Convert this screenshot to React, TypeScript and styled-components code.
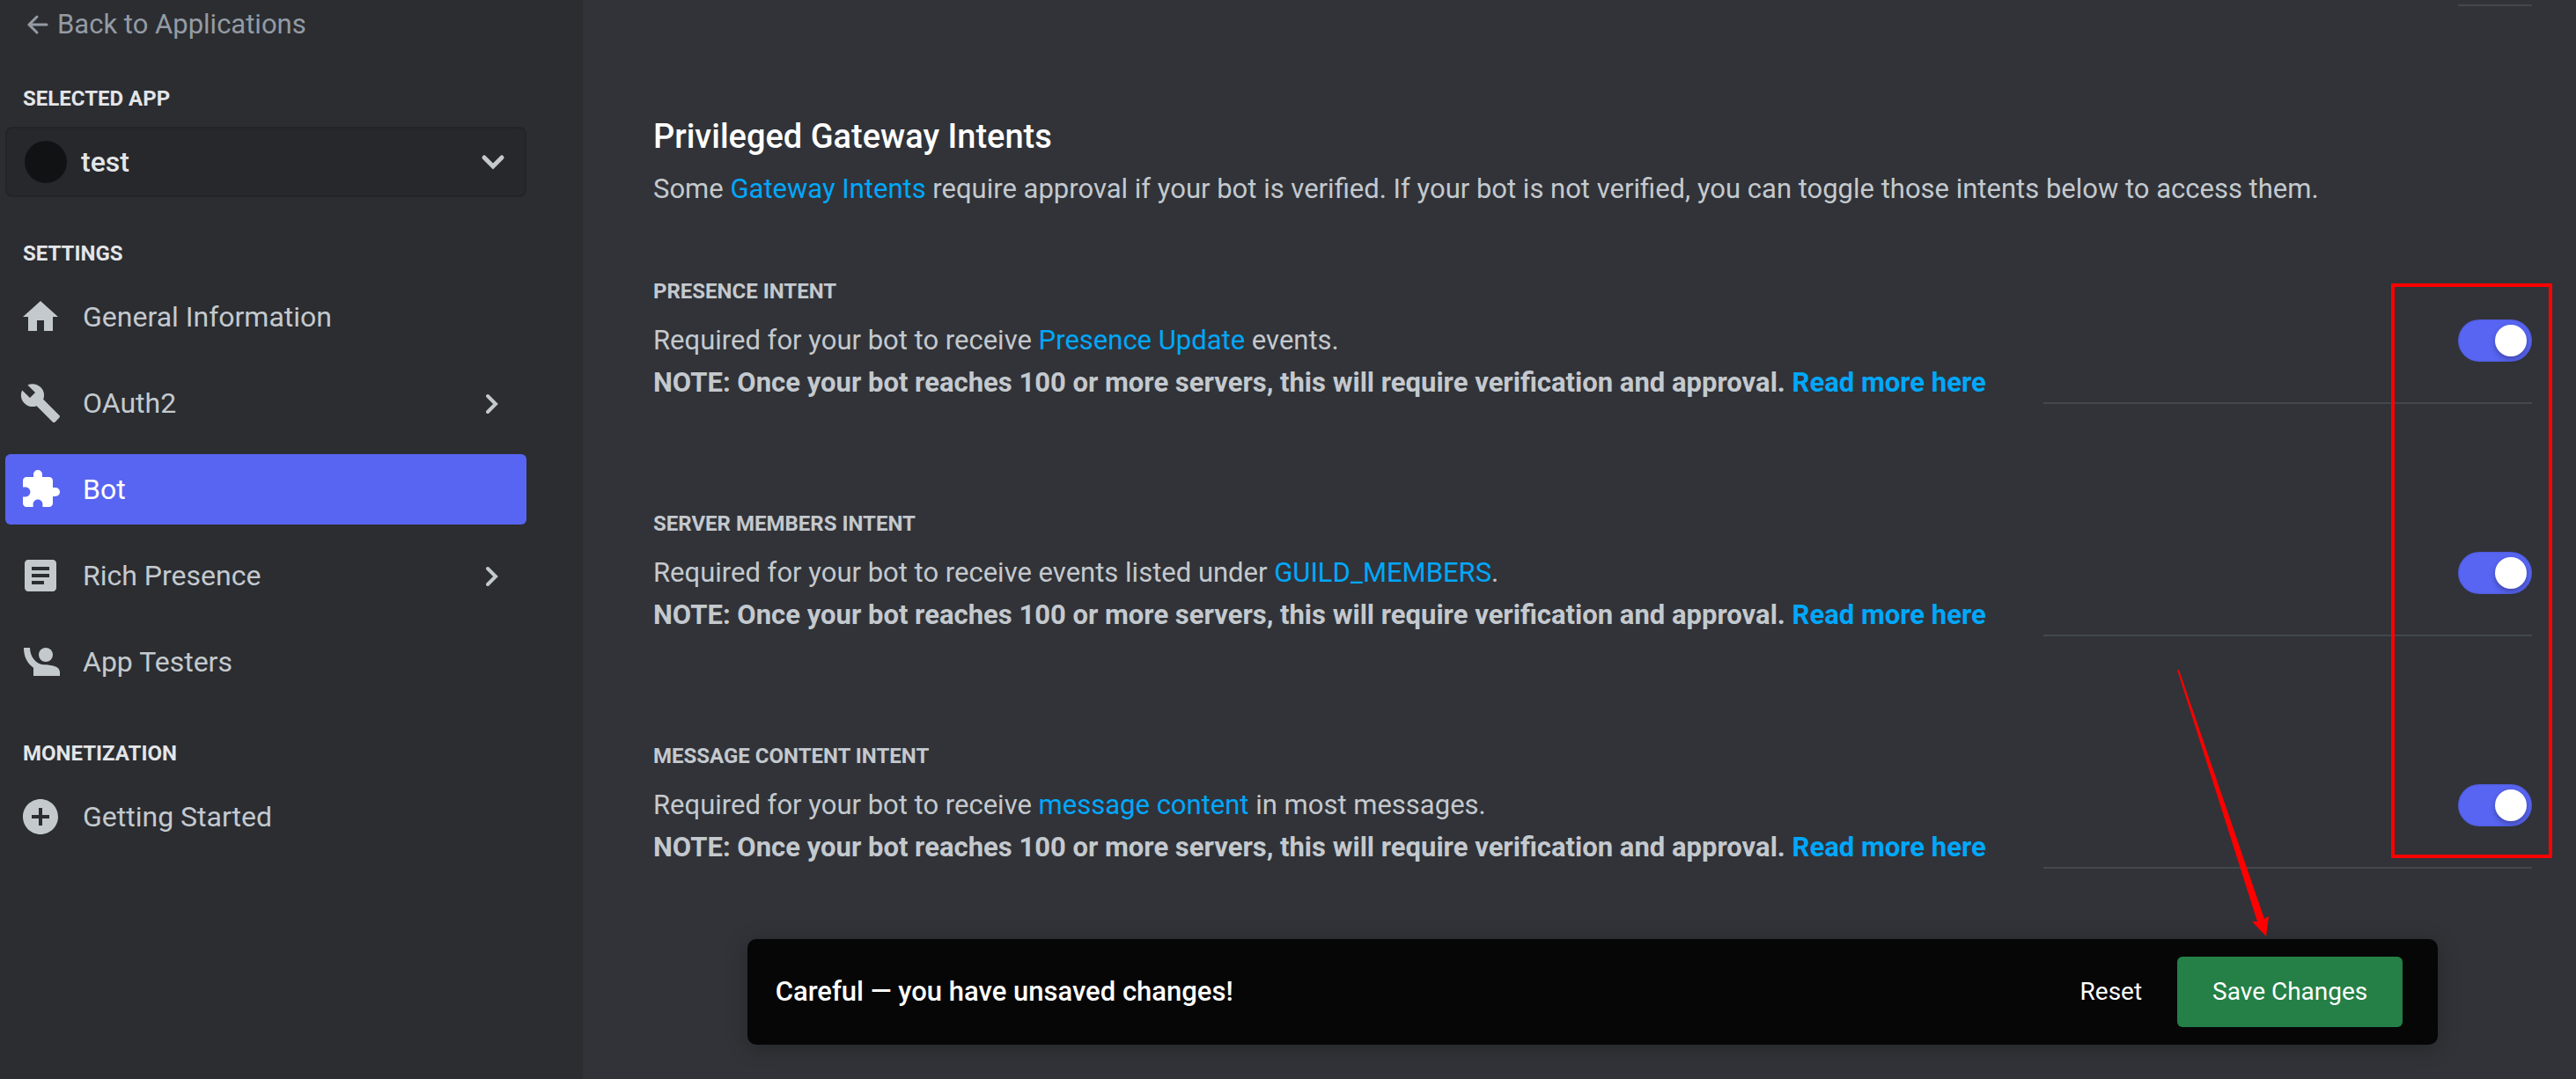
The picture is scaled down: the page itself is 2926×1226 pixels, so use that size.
import React from "react";
import styled, { createGlobalStyle } from "styled-components";
import { MdHome, MdBuild, MdExtension, MdArticle, MdAddCircle } from "react-icons/md";

const colors = {
  sidebar: "#2b2d31",
  page: "#313338",
  blurple: "#5865f2",
  text: "#c4c9ce",
  bright: "#e3e5e8",
  muted: "#949ba4",
  link: "#00a8fc",
  line: "#43474e",
  mark: "#ff0000",
};

const GlobalStyle = createGlobalStyle`
  *, *::before, *::after { box-sizing: border-box; }
  body {
    margin: 0;
    background: ${colors.page};
    color: ${colors.text};
    font-family: Roboto, "Liberation Sans", sans-serif;
    font-size: 31px;
    line-height: 48px;
    -webkit-font-smoothing: antialiased;
  }
  h1, h2, h3, p, ul { margin: 0; padding: 0; }
  a { text-decoration: none; }
`;

const Page = styled.div`
  display: flex;
  min-height: 100vh;
`;

const Sidebar = styled.aside`
  display: flex;
  flex-direction: column;
  flex: 0 0 662px;
  gap: 48px;
  padding: 8px 64px 48px 6px;
  background: ${colors.sidebar};
`;

const BackLink = styled.a`
  display: flex;
  align-items: center;
  gap: 10px;
  padding-left: 24px;
  line-height: 40px;
  color: ${colors.muted};
`;

const Group = styled.section`
  display: flex;
  flex-direction: column;
  gap: 16px;
`;

const GroupTitle = styled.h3`
  padding-left: 20px;
  font-size: 24px;
  font-weight: 700;
  line-height: 32px;
  color: ${colors.bright};
`;

const AppPicker = styled.label`
  display: flex;
  align-items: center;
  gap: 16px;
  height: 80px;
  padding: 0 12px 0 20px;
  border: 2px solid #232428;
  border-radius: 8px;
  background: #27282c;
`;

const Avatar = styled.span`
  width: 48px;
  height: 48px;
  border-radius: 50%;
  background: #111214;
`;

const AppSelect = styled.select`
  flex: 1;
  min-width: 0;
  padding: 0;
  border: 0;
  appearance: none;
  background: transparent;
  color: ${colors.bright};
  font: inherit;
  font-size: 32px;
  font-weight: 500;
`;

const NavList = styled.ul`
  display: flex;
  flex-direction: column;
  gap: 18px;
  list-style: none;
`;

const NavLink = styled.a<{ $active?: boolean }>`
  display: flex;
  align-items: center;
  gap: 24px;
  height: 80px;
  padding: 0 16px;
  border-radius: 6px;
  background: ${(p) => (p.$active ? colors.blurple : "transparent")};
  color: ${(p) => (p.$active ? "#ffffff" : colors.text)};
  font-size: 32px;

  span { flex: 1; }
`;

const Main = styled.main`
  flex: 1;
  min-width: 0;
  padding: 5px 50px 39px 80px;
`;

const ShortRule = styled.div`
  width: 84px;
  height: 2px;
  margin: 0 0 120px auto;
  background: ${colors.line};
`;

const Intro = styled.header`
  display: flex;
  flex-direction: column;
  gap: 8px;
  margin-bottom: 76px;
`;

const Title = styled.h1`
  font-size: 38px;
  font-weight: 500;
  line-height: 56px;
  color: #ffffff;
`;

const TextLink = styled.a`
  color: ${colors.link};
`;

const Intents = styled.div`
  position: relative;
  display: flex;
  flex-direction: column;
  gap: 120px;
`;

const Intent = styled.section`
  display: grid;
  grid-template-columns: minmax(0, 74fr) minmax(0, 26fr);
`;

const IntentText = styled.div`
  display: flex;
  flex-direction: column;
`;

const IntentTitle = styled.h2`
  margin-bottom: 16px;
  font-size: 24px;
  font-weight: 700;
  line-height: 32px;
  text-transform: uppercase;
`;

const Note = styled.p`
  font-weight: 700;
`;

const IntentControl = styled.div`
  display: flex;
  justify-content: flex-end;
  align-items: flex-start;
  padding-top: 48px;
  border-bottom: 2px solid ${colors.line};
`;

const Toggle = styled.input`
  display: flex;
  align-items: center;
  width: 84px;
  height: 48px;
  margin: 0;
  padding: 6px;
  border-radius: 24px;
  appearance: none;
  background: #80848e;
  box-shadow: inset 0 0 2px rgba(0, 0, 0, 0.3);

  &::before {
    content: "";
    width: 36px;
    height: 36px;
    border-radius: 50%;
    background: #ffffff;
    box-shadow: 0 3px 6px rgba(0, 0, 0, 0.3);
  }

  &:checked {
    justify-content: flex-end;
    background: ${colors.blurple};
  }
`;

const Highlight = styled.div`
  position: absolute;
  top: 7px;
  right: -23px;
  bottom: 12px;
  width: 183px;
  border: 4px solid ${colors.mark};
  pointer-events: none;
`;

const SaveBar = styled.div`
  position: relative;
  display: flex;
  align-items: center;
  width: 90%;
  margin: 80px auto 0;
  padding: 20px 40px 20px 32px;
  border-radius: 10px;
  background: #060607;
  box-shadow: 0 4px 24px rgba(0, 0, 0, 0.25);
`;

const SaveMessage = styled.p`
  flex: 1;
  font-weight: 500;
  color: #ffffff;
`;

const BarButton = styled.button<{ $filled?: boolean }>`
  height: 80px;
  padding: 0 40px;
  border: 0;
  border-radius: 6px;
  background: ${(p) => (p.$filled ? "#248046" : "transparent")};
  color: #ffffff;
  font: inherit;
  font-size: 28px;
`;

const Arrow = styled.svg`
  position: absolute;
  right: 192px;
  bottom: 123px;
  pointer-events: none;
`;

type StrokeProps = { d: string; width: number; height: number; weight: number };

const Stroke = ({ d, width, height, weight }: StrokeProps) => (
  <svg
    width={width}
    height={height}
    viewBox={`0 0 ${width} ${height}`}
    fill="none"
    stroke="currentColor"
    strokeWidth={weight}
    strokeLinecap="round"
    strokeLinejoin="miter"
    aria-hidden="true"
  >
    <path d={d} />
  </svg>
);

const TesterIcon = () => (
  <svg width="48" height="48" viewBox="0 0 24 24" fill="currentColor" aria-hidden="true">
    <circle cx="15" cy="8" r="4" />
    <path d="M2.500 4H6c0 4.900 3.200 9.400 8 9.600 4 0 9 .9 9 4.200V20H8v-4.600C4.700 12.900 2.500 9.400 2.500 4z" />
  </svg>
);

type Item = { label: string; icon: React.ReactNode; active?: boolean; expands?: boolean };

const settings: Item[] = [
  { label: "General Information", icon: <MdHome size={48} /> },
  { label: "OAuth2", icon: <MdBuild size={48} />, expands: true },
  { label: "Bot", icon: <MdExtension size={48} />, active: true },
  { label: "Rich Presence", icon: <MdArticle size={48} />, expands: true },
  { label: "App Testers", icon: <TesterIcon /> },
];

const monetization: Item[] = [{ label: "Getting Started", icon: <MdAddCircle size={48} /> }];

const Nav = ({ items }: { items: Item[] }) => (
  <NavList>
    {items.map((item) => (
      <li key={item.label}>
        <NavLink href="#" $active={item.active} aria-current={item.active ? "page" : undefined}>
          {item.icon}
          <span>{item.label}</span>
          {item.expands && <Stroke d="M20 16 29 25 20 34" width={48} height={48} weight={4} />}
        </NavLink>
      </li>
    ))}
  </NavList>
);

const intents = [
  { id: "presence", title: "Presence Intent", before: "Required for your bot to receive ", link: "Presence Update", after: " events." },
  { id: "members", title: "Server Members Intent", before: "Required for your bot to receive events listed under ", link: "GUILD_MEMBERS", after: "." },
  { id: "content", title: "Message Content Intent", before: "Required for your bot to receive ", link: "message content", after: " in most messages." },
];

export default function App() {
  return (
    <>
      <GlobalStyle />
      <Page>
        <Sidebar>
          <BackLink href="#">
            <Stroke d="M12 5 3 14 12 23M3 14H23" width={25} height={28} weight={3} />
            Back to Applications
          </BackLink>
          <Group>
            <GroupTitle>SELECTED APP</GroupTitle>
            <AppPicker>
              <Avatar />
              <AppSelect aria-label="Selected app" defaultValue="test">
                <option value="test">test</option>
              </AppSelect>
              <Stroke d="M14 19 24 29 34 19" width={48} height={48} weight={5} />
            </AppPicker>
          </Group>
          <Group>
            <GroupTitle>SETTINGS</GroupTitle>
            <Nav items={settings} />
          </Group>
          <Group>
            <GroupTitle>MONETIZATION</GroupTitle>
            <Nav items={monetization} />
          </Group>
        </Sidebar>
        <Main>
          <ShortRule />
          <Intro>
            <Title>Privileged Gateway Intents</Title>
            <p>
              Some <TextLink href="#">Gateway Intents</TextLink> require approval if your bot is verified. If your bot is not
              verified, you can toggle those intents below to access them.
            </p>
          </Intro>
          <Intents>
            {intents.map((intent) => (
              <Intent key={intent.id}>
                <IntentText>
                  <IntentTitle>
                    <label htmlFor={intent.id}>{intent.title}</label>
                  </IntentTitle>
                  <p>
                    {intent.before}
                    <TextLink href="#">{intent.link}</TextLink>
                    {intent.after}
                  </p>
                  <Note>
                    NOTE: Once your bot reaches 100 or more servers, this will require verification and approval.{" "}
                    <TextLink href="#">Read more here</TextLink>
                  </Note>
                </IntentText>
                <IntentControl>
                  <Toggle id={intent.id} type="checkbox" role="switch" defaultChecked />
                </IntentControl>
              </Intent>
            ))}
            <Highlight />
          </Intents>
          <SaveBar>
            <SaveMessage>Careful — you have unsaved changes!</SaveMessage>
            <BarButton type="button">Reset</BarButton>
            <BarButton type="button" $filled>
              Save Changes
            </BarButton>
            <Arrow width="104" height="304" viewBox="0 0 104 304" aria-hidden="true">
              <path d="M0 1H2L99 284 104 281 101 304 85 287H91Z" fill={colors.mark} />
            </Arrow>
          </SaveBar>
        </Main>
      </Page>
    </>
  );
}
